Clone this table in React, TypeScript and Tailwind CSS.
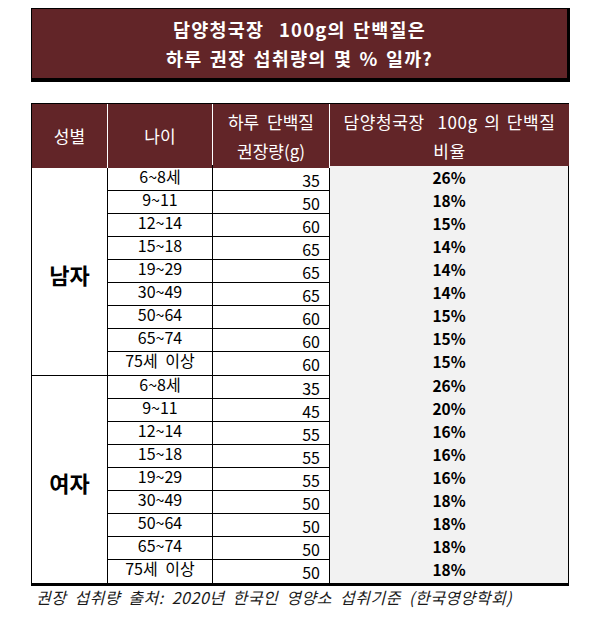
import React from "react";

const male: [string, string, string][] = [
  ["6~8세", "35", "26%"],
  ["9~11", "50", "18%"],
  ["12~14", "60", "15%"],
  ["15~18", "65", "14%"],
  ["19~29", "65", "14%"],
  ["30~49", "65", "14%"],
  ["50~64", "60", "15%"],
  ["65~74", "60", "15%"],
  ["75세 이상", "60", "15%"],
];
const female: [string, string, string][] = [
  ["6~8세", "35", "26%"],
  ["9~11", "45", "20%"],
  ["12~14", "55", "16%"],
  ["15~18", "55", "16%"],
  ["19~29", "55", "16%"],
  ["30~49", "50", "18%"],
  ["50~64", "50", "18%"],
  ["65~74", "50", "18%"],
  ["75세 이상", "50", "18%"],
];

const font = { fontFamily: '"Noto Sans CJK KR", "Noto Sans", sans-serif' };

function Group({ label, rows, last }: { label: string; rows: [string, string, string][]; last?: boolean }) {
  return (
    <div className={`flex border-l border-black ${last ? "" : "border-b border-black"}`}>
      <div className="w-[76px] shrink-0 flex items-center justify-center border-r border-black text-[22px] font-bold text-black pt-[6px]">
        {label}
      </div>
      <div className="flex-1 flex flex-col">
        {rows.map((r, i) => (
          <div
            key={i}
            className={`flex h-[23px] ${i < rows.length - 1 ? "border-b border-black" : ""}`}
          >
            <div className="w-[105px] shrink-0 border-r border-black text-center text-[16px] leading-[23px] text-black -mt-[3px] [word-spacing:4px]">
              {r[0]}
            </div>
            <div className="w-[117px] shrink-0 border-r border-black text-right pr-[9px] text-[16px] leading-[23px] text-black pt-[1px]">
              {r[1]}
            </div>
            <div className="flex-1 border-r border-black bg-[#f2f2f2] text-center text-[15.5px] font-bold leading-[23px] text-black -mt-[2px]">
              {r[2]}
            </div>
          </div>
        ))}
      </div>
    </div>
  );
}

export default function App() {
  return (
    <div className="w-[600px] h-[620px] bg-white" style={font}>
      <div className="pl-[31px] pt-[8px] w-[570px]">
        <div className="h-[74px] bg-[#622528] border-t border-l border-black border-r-[3px] border-b-[4px] flex flex-col items-center justify-center text-white font-bold text-[18.5px] leading-[29px] tracking-[1.2px] [word-spacing:2px]">
          <div className="whitespace-pre">담양청국장  100g의 단백질은</div>
          <div className="whitespace-pre">하루 권장 섭취량의 몇 % 일까?</div>
        </div>
      </div>
      <div className="pl-[31px] pt-[21px] w-[569px] box-content">
        <div className="w-[538px]">
          <div className="flex h-[65px] bg-[#622528] border-t border-l border-black text-white text-[17px] [word-spacing:4px]">
            <div className="w-[76px] shrink-0 border-r border-white flex items-center justify-center">성별</div>
            <div className="w-[105px] shrink-0 border-r border-white flex items-center justify-center">나이</div>
            <div className="w-[117px] shrink-0 border-r border-white flex flex-col items-center justify-center leading-[29px]">
              <div>하루 단백질</div>
              <div>권장량(g)</div>
            </div>
            <div className="flex-1 flex flex-col items-center justify-center leading-[29px] tracking-[0.6px] [word-spacing:2px]">
              <div className="whitespace-pre">담양청국장  100g 의 단백질</div>
              <div>비율</div>
            </div>
          </div>
          <Group label="남자" rows={male} />
          <Group label="여자" rows={female} last />
          <div className="h-[3px] bg-black" />
          <div className="pl-[5px] text-[16px] italic text-[#1a1a1a] leading-[22px] tracking-[0.5px] [word-spacing:4px]">
            권장 섭취량 출처: 2020년 한국인 영양소 섭취기준 (한국영양학회)
          </div>
        </div>
      </div>
    </div>
  );
}
